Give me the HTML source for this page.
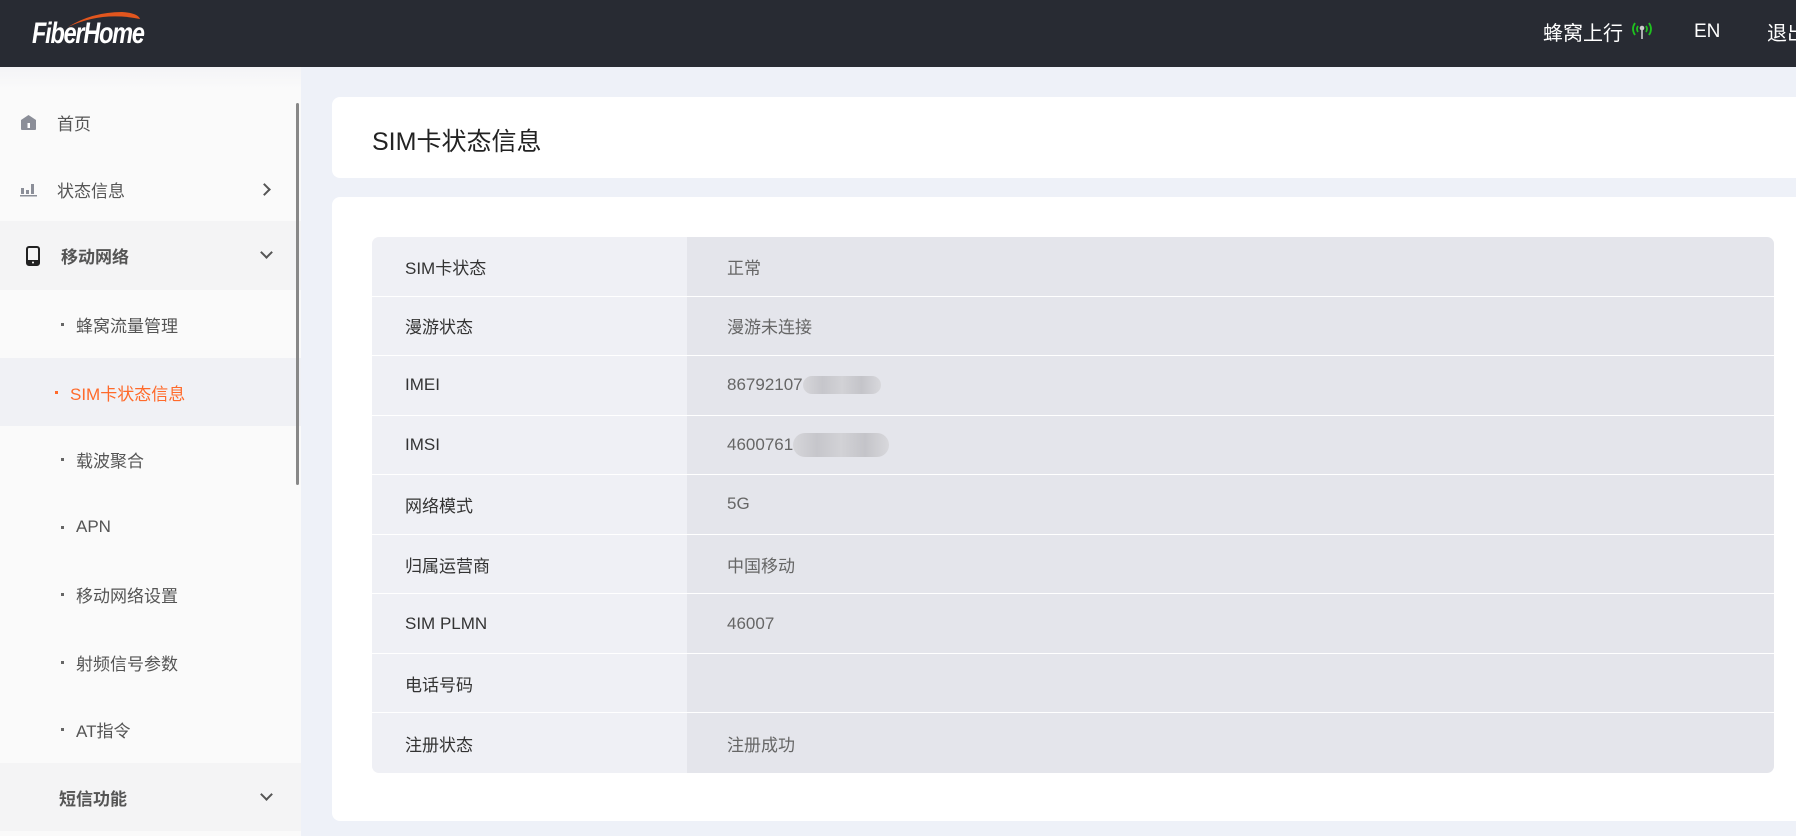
<!DOCTYPE html>
<html><head><meta charset="utf-8"><style>
*{margin:0;padding:0;box-sizing:border-box}
body{width:1796px;height:836px;overflow:hidden;background:#eef1f8;font-family:"Liberation Sans","Noto Sans CJK SC",sans-serif;position:relative}
.hdr{position:absolute;left:0;top:0;width:1796px;height:67px;background:#282b33}
.abs{position:absolute;white-space:nowrap}
.side{position:absolute;left:0;top:67px;width:301px;height:769px;background:#fafafa}
.it{position:absolute;left:0;width:301px;height:68px;font-size:17px;color:#555;display:flex;align-items:center}
.sub .t{position:absolute;left:76px}
.sub .d{position:absolute;left:61px;width:3px;height:3px;background:#666}
.chev{position:absolute;left:262px;width:9px;height:9px;border-right:2px solid #555;border-bottom:2px solid #555}
.card{position:absolute;left:332px;right:0;background:#fff;border-radius:8px 0 0 8px}
.tbl{position:absolute;left:372px;top:237px;width:1402px;height:536px;border-radius:7px;overflow:hidden}
.row{height:59.55px;display:flex;border-bottom:1.5px solid #fff;font-size:17px}
.row:last-child{border-bottom:none}
.l{width:315px;background:#eff0f5;color:#333;padding-left:33px;display:flex;align-items:center}
.v{flex:1;background:#e4e5eb;color:#666;padding-left:40px;display:flex;align-items:center}
.blur{display:inline-block;width:78px;height:18px;border-radius:9px;background:linear-gradient(90deg,#d6d6da,#c6c6cb,#d2d2d6,#c4c4c9,#d8d8dc);margin-left:0}
</style></head><body>
<div class="hdr">
 <svg class="abs" style="left:62px;top:9px" width="80" height="22"><path d="M6 18 Q40 2 78 10 Q76 4 60 3 Q30 3 6 18Z" fill="#e2561e"/></svg>
 <div class="abs" style="left:32px;top:17px;font-size:30px;font-weight:bold;font-style:italic;color:#fff;letter-spacing:-1.5px;transform:scaleX(.78);transform-origin:left">FiberHome</div>
 <div class="abs" style="left:1543px;top:17px;font-size:20px;color:#fff">蜂窝上行</div>
 <svg class="abs" style="left:1630px;top:18px" width="24" height="24"><path d="M5 5 Q1 11 5 17 M19 5 Q23 11 19 17 M8 8 Q6 11 8 14 M16 8 Q18 11 16 14" stroke="#1fc21f" stroke-width="1.8" fill="none"/><circle cx="12" cy="10" r="2.3" fill="#ccc"/><rect x="11.2" y="11" width="1.6" height="10" fill="#ccc"/></svg>
 <div class="abs" style="left:1694px;top:21px;font-size:19px;color:#fff">EN</div>
 <div class="abs" style="left:1767px;top:17px;font-size:20px;color:#fff">退出</div>
</div>
<div class="side">
 <div style="position:absolute;left:0;top:0;width:301px;height:22px;background:linear-gradient(#f4f4f6,#fafafa)"></div>
</div>
<div style="position:absolute;left:301px;top:67px;width:31px;height:769px;background:#eef1f8"></div>
<div class="it" style="top:88px"><svg class="abs" style="left:20px" width="17" height="17"><path d="M1 6 L8.5 1 L16 6 V15 Q16 16 15 16 H2 Q1 16 1 15Z" fill="#8b8e98"/><rect x="7.5" y="9" width="2.5" height="5" fill="#fff"/></svg><span class="abs" style="left:57px">首页</span></div>
<div class="it" style="top:155px"><svg class="abs" style="left:20px" width="18" height="16"><rect x="1" y="7" width="3" height="6" fill="#8b8e98"/><rect x="6" y="9" width="3" height="4" fill="#8b8e98"/><rect x="11" y="3" width="3" height="10" fill="#8b8e98"/><rect x="0" y="14" width="17" height="1.5" fill="#8b8e98"/></svg><span class="abs" style="left:57px">状态信息</span><div class="chev" style="transform:rotate(-45deg);left:260px"></div></div>
<div class="it" style="top:221px;height:69px;background:#f4f4f5"><svg class="abs" style="left:26px" width="14" height="20"><rect x="1" y="1" width="12" height="18" rx="2" fill="none" stroke="#222" stroke-width="2"/><rect x="1" y="14" width="12" height="5" fill="#222"/><circle cx="7" cy="16.5" r="1" fill="#fff"/></svg><span class="abs" style="left:61px;font-weight:bold;color:#555">移动网络</span><div class="chev" style="transform:rotate(45deg);top:27px"></div></div>
<div class="it sub" style="top:290px"><i class="d"></i><span class="t">蜂窝流量管理</span></div>
<div class="it sub" style="top:358px;background:#f0f1f5"><i class="d" style="left:55px;background:#ff6a2a"></i><span class="t" style="left:70px;color:#ff6a2a">SIM卡状态信息</span></div>
<div class="it sub" style="top:425px"><i class="d"></i><span class="t">载波聚合</span></div>
<div class="it sub" style="top:493px"><i class="d"></i><span class="t">APN</span></div>
<div class="it sub" style="top:560px"><i class="d"></i><span class="t">移动网络设置</span></div>
<div class="it sub" style="top:628px"><i class="d"></i><span class="t">射频信号参数</span></div>
<div class="it sub" style="top:695px"><i class="d"></i><span class="t">AT指令</span></div>
<div class="it" style="top:763px;background:#f4f4f5"><span class="abs" style="left:59px;font-weight:bold;color:#555">短信功能</span><div class="chev" style="transform:rotate(45deg);top:27px"></div></div>
<div style="position:absolute;left:296px;top:103px;width:3px;height:382px;background:#888;border-radius:2px"></div>

<div class="card" style="top:97px;height:81px"><div class="abs" style="left:40px;top:25px;font-size:25px;color:#222">SIM卡状态信息</div></div>
<div class="card" style="top:197px;height:624px"></div>
<div class="tbl">
 <div class="row"><div class="l">SIM卡状态</div><div class="v">正常</div></div>
 <div class="row"><div class="l">漫游状态</div><div class="v">漫游未连接</div></div>
 <div class="row"><div class="l">IMEI</div><div class="v">86792107<span class="blur"></span></div></div>
 <div class="row"><div class="l">IMSI</div><div class="v">4600761<span class="blur" style="width:96px;height:24px;border-radius:12px"></span></div></div>
 <div class="row"><div class="l">网络模式</div><div class="v">5G</div></div>
 <div class="row"><div class="l">归属运营商</div><div class="v">中国移动</div></div>
 <div class="row"><div class="l">SIM PLMN</div><div class="v">46007</div></div>
 <div class="row"><div class="l">电话号码</div><div class="v"></div></div>
 <div class="row"><div class="l">注册状态</div><div class="v">注册成功</div></div>
</div>
</body></html>
